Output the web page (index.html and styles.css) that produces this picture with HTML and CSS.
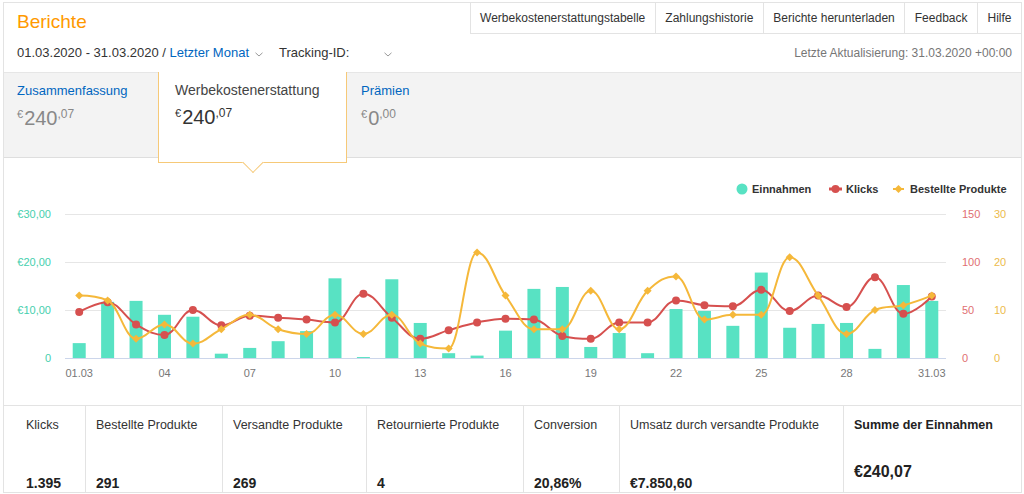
FILE: index.html
```html
<!DOCTYPE html>
<html lang="de">
<head>
<meta charset="utf-8">
<title>Berichte</title>
<link rel="stylesheet" href="styles.css">
</head>
<body>
<div class="page">
  <header class="header">
    <div class="top-row">
      <h1 class="title">Berichte</h1>
      <nav class="links">
        <a class="link">Werbekostenerstattungstabelle</a>
        <a class="link">Zahlungshistorie</a>
        <a class="link">Berichte herunterladen</a>
        <a class="link">Feedback</a>
        <a class="link">Hilfe</a>
      </nav>
    </div>
    <div class="filter-row">
      <div class="filters">
        <span class="range">01.03.2020 - 31.03.2020 /&nbsp;</span>
        <span class="period">Letzter Monat</span>
        <svg class="chev" width="8" height="5" viewBox="0 0 8 5"><polyline points="0.5,0.8 4,4 7.5,0.8"/></svg>
        <span class="tracking">Tracking-ID:</span>
        <svg class="chev chev-wide" width="8" height="5" viewBox="0 0 8 5"><polyline points="0.5,0.8 4,4 7.5,0.8"/></svg>
      </div>
      <div class="updated">Letzte Aktualisierung: 31.03.2020 +00:00</div>
    </div>
  </header>

  <section class="summary">
    <div class="sum-tab tab-first">
      <div class="sum-label">Zusammenfassung</div>
      <div class="sum-value"><span class="cur">€</span>240<span class="cents">,07</span></div>
    </div>
    <div class="sum-tab tab-active">
      <div class="sum-label">Werbekostenerstattung</div>
      <div class="sum-value"><span class="cur">€</span>240<span class="cents">,07</span></div>
    </div>
    <div class="sum-tab tab-last">
      <div class="sum-label">Prämien</div>
      <div class="sum-value"><span class="cur">€</span>0<span class="cents">,00</span></div>
    </div>
  </section>

  <section class="chart">
    <svg class="chart-svg" id="chart" width="1017" height="247" viewBox="4 158 1017 247">
      <g class="legend">
        <circle class="fill-teal" cx="742" cy="189" r="5.5"/>
        <text x="752" y="193">Einnahmen</text>
        <line class="stroke-red" x1="829" y1="189" x2="842" y2="189"/>
        <circle class="fill-red" cx="835.5" cy="189" r="4"/>
        <text x="846" y="193">Klicks</text>
        <line class="stroke-yellow" x1="893" y1="189" x2="904" y2="189"/>
        <path class="fill-yellow" d="M898.5 185 L902.5 189 L898.5 193 L894.5 189 Z"/>
        <text x="910" y="193">Bestellte Produkte</text>
      </g>
      <g class="grid">
        <line x1="65" y1="214.5" x2="946" y2="214.5"/>
        <line x1="65" y1="262.5" x2="946" y2="262.5"/>
        <line x1="65" y1="310.5" x2="946" y2="310.5"/>
      </g>
      <g class="ylab ylab-teal">
        <text x="51" y="218">€30,00</text>
        <text x="51" y="266">€20,00</text>
        <text x="51" y="314">€10,00</text>
        <text x="51" y="362">0</text>
      </g>
      <g class="ylab ylab-red">
        <text x="962" y="218">150</text>
        <text x="962" y="266">100</text>
        <text x="962" y="314">50</text>
        <text x="962" y="362">0</text>
      </g>
      <g class="ylab ylab-yellow">
        <text x="994" y="218">30</text>
        <text x="994" y="266">20</text>
        <text x="994" y="314">10</text>
        <text x="994" y="362">0</text>
      </g>
      <g class="xlab">
        <text x="79.2" y="377">01.03</text>
        <text x="164.5" y="377">04</text>
        <text x="249.8" y="377">07</text>
        <text x="335" y="377">10</text>
        <text x="420.3" y="377">13</text>
        <text x="505.5" y="377">16</text>
        <text x="590.8" y="377">19</text>
        <text x="676" y="377">22</text>
        <text x="761.3" y="377">25</text>
        <text x="846.6" y="377">28</text>
        <text x="931.8" y="377">31.03</text>
      </g>
      <g id="series"></g>
      <line class="axis-line" x1="65" y1="358.5" x2="946" y2="358.5"/>
      <g id="lines"></g>
    </svg>
  </section>

  <section class="stats">
    <div class="stat stat-first">
      <div class="stat-label">Klicks</div>
      <div class="stat-value">1.395</div>
    </div>
    <div class="stat">
      <div class="stat-label">Bestellte Produkte</div>
      <div class="stat-value">291</div>
    </div>
    <div class="stat">
      <div class="stat-label">Versandte Produkte</div>
      <div class="stat-value">269</div>
    </div>
    <div class="stat">
      <div class="stat-label">Retournierte Produkte</div>
      <div class="stat-value">4</div>
    </div>
    <div class="stat">
      <div class="stat-label">Conversion</div>
      <div class="stat-value">20,86%</div>
    </div>
    <div class="stat">
      <div class="stat-label">Umsatz durch versandte Produkte</div>
      <div class="stat-value">€7.850,60</div>
    </div>
    <div class="stat stat-total">
      <div class="stat-label">Summe der Einnahmen</div>
      <div class="stat-value">€240,07</div>
    </div>
  </section>
</div>
<script src="script.js"></script>
</body>
</html>
```

FILE: styles.css
```css
* { box-sizing: border-box; }

html, body {
  margin: 0;
  padding: 0;
  background: #fff;
}

body {
  font-family: "Liberation Sans", Arial, sans-serif;
  color: #333;
}

.page {
  margin: 2px 0 0 3px;
  width: 1019px;
  border: 1px solid #e3e3e3;
  border-bottom: 0;
}

/* header */
.top-row {
  display: flex;
  justify-content: space-between;
  align-items: flex-start;
  height: 31px;
}

.title {
  margin: 8px 0 0 13px;
  font-size: 19px;
  line-height: 22px;
  font-weight: normal;
  color: #f90;
}

.links {
  display: flex;
  height: 31px;
  border-bottom: 1px solid #e3e3e3;
}

.link {
  display: block;
  padding: 0 9.5px;
  height: 30px;
  line-height: 30px;
  font-size: 12px;
  color: #333;
  border-left: 1px solid #e3e3e3;
  white-space: nowrap;
}

.filter-row {
  display: flex;
  justify-content: space-between;
  align-items: center;
  height: 38px;
  padding: 0 9px 0 13px;
}

.filters {
  display: flex;
  align-items: center;
  font-size: 13px;
  line-height: 16px;
  white-space: nowrap;
}

.range { color: #333; }
.period { color: #0066c0; }
.tracking { color: #333; margin-left: 16px; }

.chev {
  margin: 3px 0 0 6px;
  display: block;
}
.chev polyline {
  fill: none;
  stroke: #999;
  stroke-width: 1;
}
.chev-wide { margin-left: 35px; }

.updated {
  font-size: 12px;
  color: #767676;
  white-space: nowrap;
}

/* summary band */
.summary {
  display: flex;
  height: 86px;
  background: #f3f3f3;
  border-top: 1px solid #e6e6e6;
  border-bottom: 1px solid #dedede;
}

.sum-tab {
  padding: 10px 0 0 13px;
}

.tab-first { width: 154px; }
.tab-last { padding-left: 14px; }

.tab-active {
  position: relative;
  z-index: 2;
  width: 189px;
  margin: -1px 0 -6px;
  padding: 10px 0 0 16px;
  background: #fff;
  border: 1px solid #f6c978;
  border-top: 0;
}

.tab-active::after {
  content: "";
  position: absolute;
  left: 50%;
  bottom: -7.5px;
  width: 14px;
  height: 14px;
  background: #fff;
  border-right: 1px solid #f6c978;
  border-bottom: 1px solid #f6c978;
  transform: translateX(-50%) rotate(45deg);
}

.sum-label {
  font-size: 13px;
  line-height: 16px;
  color: #0066c0;
  white-space: nowrap;
}

.tab-active .sum-label {
  font-size: 14px;
  line-height: 17px;
  color: #444;
}

.sum-value {
  margin-top: 7px;
  font-size: 20px;
  line-height: 24px;
  color: #888;
  white-space: nowrap;
}

.tab-active .sum-value {
  margin-top: 6px;
  color: #333;
}

.cur {
  font-size: 11px;
  line-height: 0;
  vertical-align: 7px;
  margin-right: 1px;
}

.cents {
  font-size: 12px;
  line-height: 0;
  vertical-align: 7px;
}

/* chart */
.chart {
  height: 247px;
}

.chart-svg {
  display: block;
}

.chart-svg text {
  font-family: "Liberation Sans", Arial, sans-serif;
  font-size: 11px;
}

.legend text {
  font-weight: bold;
  fill: #333;
}

.fill-teal { fill: #58e2c3; }
.fill-red { fill: #d6504f; }
.fill-yellow { fill: #f5b83a; }
.stroke-red { stroke: #d6504f; stroke-width: 3; }
.stroke-yellow { stroke: #f5b83a; stroke-width: 2; }

.grid line {
  stroke: #e6e6e6;
  stroke-width: 1;
}

.axis-line {
  stroke: #ccd6eb;
  stroke-width: 1;
}

.ylab-teal text { fill: #46cfae; text-anchor: end; }
.ylab-red text { fill: #df6f72; }
.ylab-yellow text { fill: #ecbb4c; }

.xlab text {
  fill: #777;
  text-anchor: middle;
}

.bar { fill: #58e2c3; }

.series-line {
  fill: none;
  stroke-width: 2;
  stroke-linejoin: round;
  stroke-linecap: round;
}
.line-red { stroke: #d6504f; }
.line-yellow { stroke: #f5b83a; }

/* stats */
.stats {
  display: grid;
  grid-template-columns: 81px 137px 144px 157px 96px 224px 1fr;
  border-top: 1px solid #e3e3e3;
  border-bottom: 1px solid #e3e3e3;
}

.stat {
  display: flex;
  flex-direction: column;
  justify-content: space-between;
  height: 86px;
  padding: 11px 10px 1px;
  border-left: 1px solid #e3e3e3;
  white-space: nowrap;
}

.stat-first {
  border-left: 0;
  padding-left: 22px;
}

.stat-label {
  font-size: 12.5px;
  line-height: 16px;
  color: #333;
}

.stat-value {
  font-size: 14px;
  line-height: 16px;
  font-weight: bold;
  color: #222;
}

.stat-total .stat-label {
  font-weight: bold;
  color: #222;
}

.stat-total .stat-value {
  font-size: 16px;
  line-height: 18px;
  margin-bottom: 10px;
}
```

FILE: script.js
```javascript
(function () {
  var NS = 'http://www.w3.org/2000/svg';
  var revenue = [3.1, 11.7, 11.9, 9.0, 8.6, 0.9, 2.1, 3.5, 5.6, 16.6, 0.2, 16.4, 7.3, 1.0, 0.5, 5.7,
    14.4, 14.8, 2.3, 5.2, 1.0, 10.2, 9.8, 6.7, 17.8, 6.3, 7.1, 7.3, 1.9, 15.2, 11.9];
  var clicks = [48, 58, 35, 24, 50, 34, 44, 42, 40, 37, 67, 42, 20, 29, 37, 41, 40, 23, 20, 37,
    37, 60, 55, 54, 71, 49, 65, 53, 84, 46, 64];
  var orders = [13, 12, 4, 7, 3, 6, 9, 6, 5, 9, 5, 9, 3, 2, 22, 13, 6, 6, 14, 6, 14, 17, 8, 9, 9,
    21, 13, 5, 10, 11, 13];

  var left = 65, width = 881, base = 358, n = 31, step = width / n;

  function el(name, attrs, parent) {
    var e = document.createElementNS(NS, name);
    for (var k in attrs) e.setAttribute(k, attrs[k]);
    parent.appendChild(e);
    return e;
  }

  function xAt(i) { return left + step * (i + 0.5); }

  function spline(pts) {
    var s = 1.5, d = s + 1;
    var conts = pts.map(function (p, i) {
      if (i === 0 || i === pts.length - 1) return null;
      var l = pts[i - 1], nx = pts[i + 1];
      var lx = (s * p.x + l.x) / d, ly = (s * p.y + l.y) / d;
      var rx = (s * p.x + nx.x) / d, ry = (s * p.y + nx.y) / d;
      if (rx !== lx) {
        var c = ((ry - ly) * (rx - p.x)) / (rx - lx) + p.y - ry;
        ly += c; ry += c;
      }
      if (ly > l.y && ly > p.y) { ly = Math.max(l.y, p.y); ry = 2 * p.y - ly; }
      else if (ly < l.y && ly < p.y) { ly = Math.min(l.y, p.y); ry = 2 * p.y - ly; }
      if (ry > nx.y && ry > p.y) { ry = Math.max(nx.y, p.y); ly = 2 * p.y - ry; }
      else if (ry < nx.y && ry < p.y) { ry = Math.min(nx.y, p.y); ly = 2 * p.y - ry; }
      return { lx: lx, ly: ly, rx: rx, ry: ry };
    });
    var dStr = 'M' + pts[0].x.toFixed(2) + ' ' + pts[0].y.toFixed(2);
    for (var i = 1; i < pts.length; i++) {
      var prev = pts[i - 1], p = pts[i];
      var c1 = conts[i - 1] ? [conts[i - 1].rx, conts[i - 1].ry] : [prev.x, prev.y];
      var c2 = conts[i] ? [conts[i].lx, conts[i].ly] : [p.x, p.y];
      dStr += ' C' + c1[0].toFixed(2) + ' ' + c1[1].toFixed(2) + ' ' +
        c2[0].toFixed(2) + ' ' + c2[1].toFixed(2) + ' ' + p.x.toFixed(2) + ' ' + p.y.toFixed(2);
    }
    return dStr;
  }

  var series = document.getElementById('series');
  var lines = document.getElementById('lines');

  revenue.forEach(function (v, i) {
    var h = v * 4.8;
    el('rect', { 'class': 'bar', x: (xAt(i) - 6.5).toFixed(2), y: (base - h).toFixed(2), width: 13, height: h.toFixed(2) }, series);
  });

  var redPts = clicks.map(function (v, i) { return { x: xAt(i), y: base - v * 0.96 }; });
  var yelPts = orders.map(function (v, i) { return { x: xAt(i), y: base - v * 4.8 }; });

  el('path', { 'class': 'series-line line-red', d: spline(redPts) }, lines);
  redPts.forEach(function (p) {
    el('circle', { 'class': 'fill-red', cx: p.x.toFixed(2), cy: p.y.toFixed(2), r: 4 }, lines);
  });

  el('path', { 'class': 'series-line line-yellow', d: spline(yelPts) }, lines);
  yelPts.forEach(function (p) {
    var r = 4;
    var dd = 'M' + p.x + ' ' + (p.y - r) + ' L' + (p.x + r) + ' ' + p.y + ' L' + p.x + ' ' + (p.y + r) + ' L' + (p.x - r) + ' ' + p.y + ' Z';
    el('path', { 'class': 'fill-yellow', d: dd }, lines);
  });
})();
```
